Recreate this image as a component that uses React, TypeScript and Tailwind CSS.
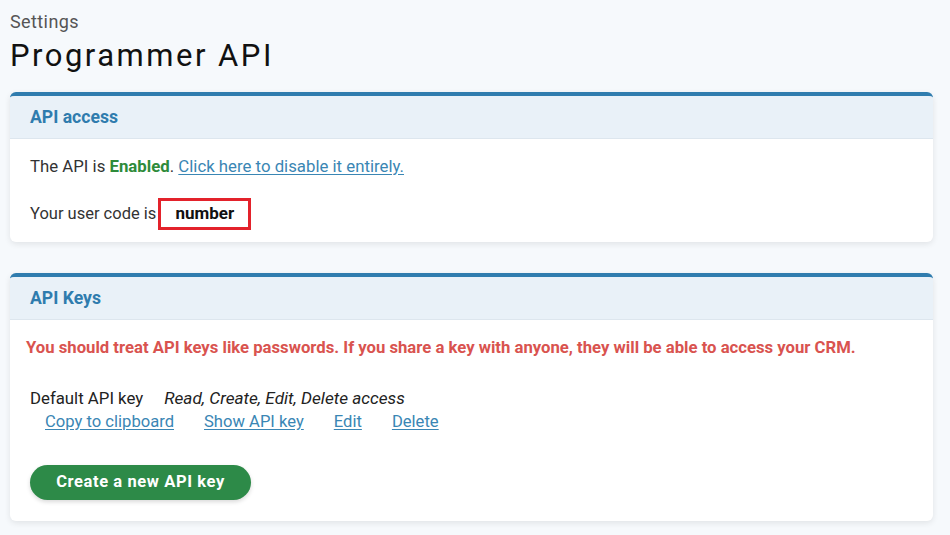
import React from "react";

const Card: React.FC<{ title: string; children: React.ReactNode; className?: string }> = ({
  title,
  children,
  className,
}) => {
  return (
    <div
      className={
        "w-[923px] rounded-[6px] border-t-[4px] border-[#2f7cae] bg-white shadow-[0_2px_6px_rgba(0,0,0,0.09)] overflow-hidden " +
        (className ?? "")
      }
    >
      <div className="h-[43px] flex items-center px-[20px] pt-[1px] bg-[#e9f1f8] border-b border-[#dde6ee]">
        <h2 className="text-[17.6px] font-bold text-[#2f7cae]">{title}</h2>
      </div>
      {children}
    </div>
  );
};

export default function App() {
  return (
    <div
      className="w-[950px] h-[535px] overflow-hidden bg-[#f6f9fc] px-[10px] pt-[12px] text-[#222]"
      style={{ fontFamily: "Roboto, 'Liberation Sans', sans-serif" }}
    >
      <div className="text-[18px] leading-[20px] tracking-[0.4px] text-[#555]">Settings</div>
      <h1 className="text-[31px] leading-[36px] tracking-[2.5px] text-[#111] mt-[6px]">Programmer API</h1>

      <Card title="API access" className="mt-[18px]">
        <div className="px-[20px] pt-[15px] pb-[12px] text-[16.8px] text-[#333]">
          <p className="leading-[24px]">
            The API is <span className="font-bold text-[#2e8b3a]">Enabled</span>.{" "}
            <a className="text-[#3a86b4] underline underline-offset-2">Click here to disable it entirely.</a>
          </p>
          <div className="flex items-center mt-[20px]">
            <span className="text-[16.5px]">Your user code is</span>
            <span className="ml-[2px] w-[93px] h-[32px] border-[3px] border-[#e3222b] flex items-center justify-center text-[17px] font-bold text-[#111]">
              number
            </span>
          </div>
        </div>
      </Card>

      <Card title="API Keys" className="mt-[31px]">
        <div className="pl-[16px] pr-[20px] pt-[18px] pb-[21px]">
          <p className="text-[16.7px] font-bold text-[#d9534f] leading-[20px]">
            You should treat API keys like passwords. If you share a key with anyone, they will be able to access
            your CRM.
          </p>
          <div className="pl-[4px] mt-[30px] flex gap-[21px] leading-[20px] text-[#222]">
            <span className="text-[16.8px]">Default API key</span>
            <span className="text-[17.2px] italic">Read, Create, Edit, Delete access</span>
          </div>
          <div className="pl-[19px] mt-[4px] flex gap-[30px] text-[16.6px] leading-[20px] text-[#3a86b4] [&>a]:underline [&>a]:underline-offset-2">
            <a>Copy to clipboard</a>
            <a>Show API key</a>
            <a>Edit</a>
            <a>Delete</a>
          </div>
          <button className="block ml-[4px] mt-[33px] w-[221px] h-[35px] rounded-full bg-[#2d8a48] text-white text-[16.5px] font-bold tracking-[0.6px] shadow-[0_2px_4px_rgba(0,0,0,0.15)]">
            Create a new API key
          </button>
        </div>
      </Card>
    </div>
  );
}
